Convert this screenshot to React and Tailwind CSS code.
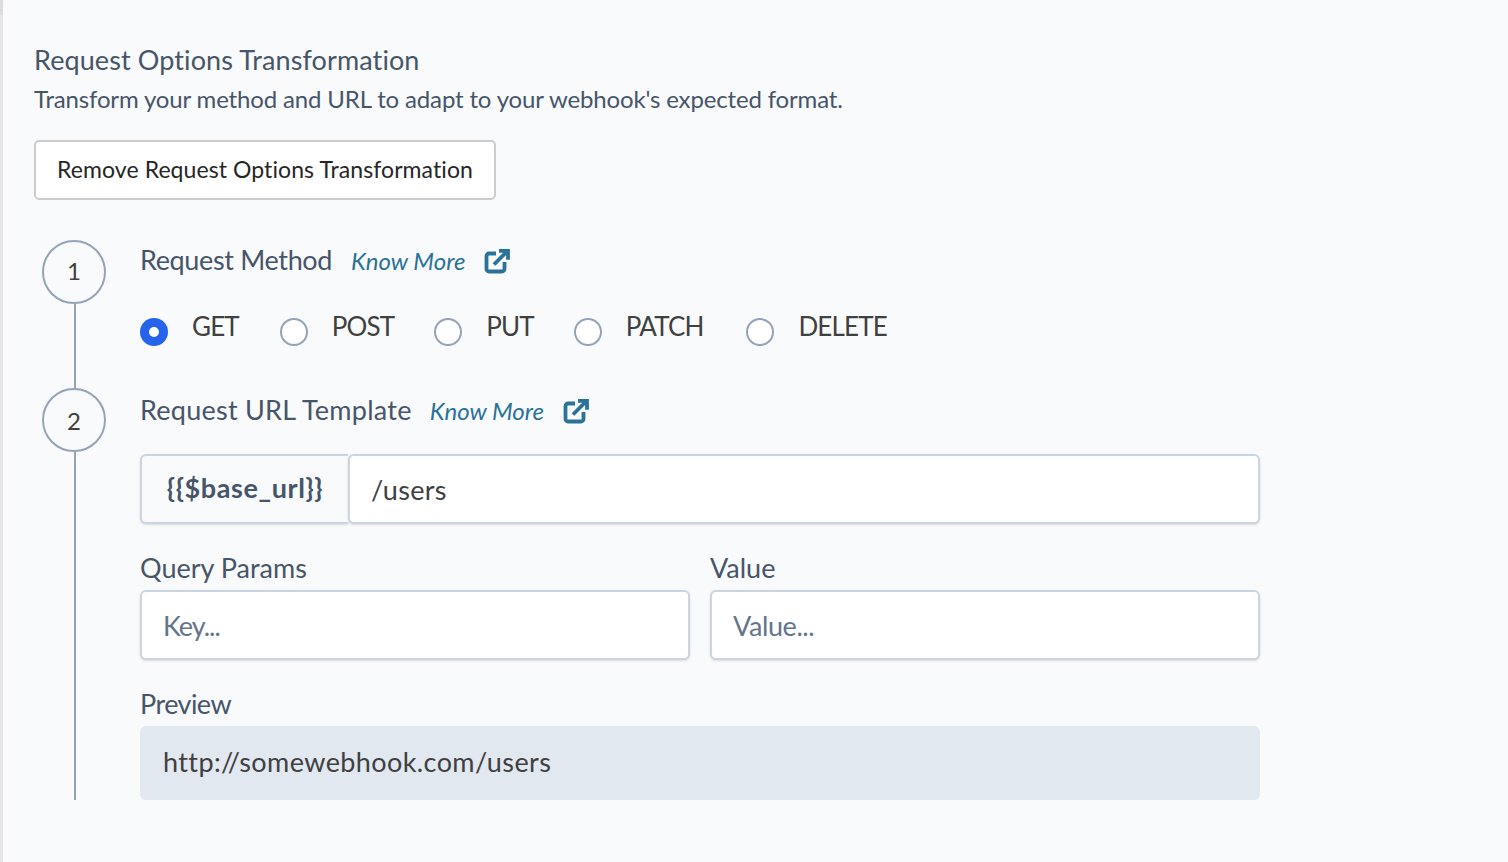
import React from "react";

const font = { fontFamily: 'Lato, "Noto Sans", sans-serif', fontVariantLigatures: "none" };

function LinkIcon() {
  return (
    <svg viewBox="0 0 26 26" className="w-[26px] h-[26px] ml-[19px]" fill="none" stroke="#2a7297" strokeWidth="3.8">
      <path d="M12 5.5H5a2.5 2.5 0 0 0-2.5 2.5v13a2.5 2.5 0 0 0 2.5 2.5h13a2.5 2.5 0 0 0 2.5-2.5v-7" strokeLinejoin="round" />
      <path d="M10 16.5 22 4.5" />
      <path d="M15 2.8h9v9" strokeLinejoin="miter" />
    </svg>
  );
}

function KnowMore({ className }) {
  return (
    <span className={"flex items-center mt-[2px] " + (className || "")}>
      <span className="italic text-[24px] leading-[30px] text-[#2a7297]">Know More</span>
      <LinkIcon />
    </span>
  );
}

function Circle({ n, className }) {
  return (
    <div className={"w-[64px] h-[64px] rounded-full border-2 border-[#94a3b8] flex items-center justify-center text-[24px] text-[#404040] shrink-0 " + className}>
      {n}
    </div>
  );
}

function Radio({ label, checked }) {
  return (
    <label className="flex items-start">
      {checked ? (
        <span className="w-[28px] h-[28px] mt-[5px] rounded-full bg-[#2563eb] flex items-center justify-center">
          <span className="w-[10px] h-[10px] rounded-full bg-white" />
        </span>
      ) : (
        <span className="w-[28px] h-[28px] mt-[5px] rounded-full border-2 border-[#94a3b8] bg-white" />
      )}
      <span className="ml-[24px] text-[26px] leading-[26px] tracking-[-0.85px] text-[#404040]">{label}</span>
    </label>
  );
}

const inputCls =
  "w-full h-full bg-white border-2 border-[#cbd5e1] rounded-[6px] shadow-sm px-[21px] text-[27px] text-[#404040] placeholder:text-[#64748b] outline-none";

export default function App() {
  return (
    <div style={font} className="flex min-h-[862px] bg-[#f8fafc]">
      <div className="w-[3px] shrink-0 flex flex-col">
        <div className="h-[15px] bg-[#dcdcdc]" />
        <div className="flex-1 bg-[#e5e5e5]" />
      </div>
      <div className="flex-1 pl-[31px] pt-[40px]">
        <h2 className="text-[27px] leading-[40px] tracking-[0.1px] text-[#475569] font-normal">Request Options Transformation</h2>
        <p className="text-[24px] leading-[38px] tracking-[-0.15px] text-[#475569]">Transform your method and URL to adapt to your webhook's expected format.</p>
        <button className="mt-[22px] h-[60px] w-[462px] pb-[2px] bg-white border-2 border-[#cccccc] rounded-[5px] text-[23px] tracking-[0.08px] text-[#262626]">
          Remove Request Options Transformation
        </button>

        <div className="mt-[40px] ml-[8px] flex h-[148px]">
          <div className="w-[64px] flex flex-col items-center">
            <Circle n="1" className="pb-[2px]" />
            <div className="w-[2px] flex-1 bg-[#94a3b8] ml-[2px]" />
          </div>
          <div className="ml-[34px]">
            <div className="flex items-center h-[40px]">
              <span className="text-[27px] tracking-[-0.35px] text-[#475569]">Request Method</span>
              <KnowMore className="ml-[19px]" />
            </div>
            <div className="flex mt-[33px]">
              <Radio label="GET" checked />
              <div className="ml-[41px]"><Radio label="POST" /></div>
              <div className="ml-[40px]"><Radio label="PUT" /></div>
              <div className="ml-[40px]"><Radio label="PATCH" /></div>
              <div className="ml-[43px]"><Radio label="DELETE" /></div>
            </div>
          </div>
        </div>

        <div className="ml-[8px] flex h-[412px]">
          <div className="w-[64px] flex flex-col items-center">
            <Circle n="2" className="pt-[1px]" />
            <div className="w-[2px] flex-1 bg-[#94a3b8] ml-[2px]" />
          </div>
          <div className="ml-[34px] w-[1120px]">
            <div className="flex items-center h-[44px]">
              <span className="text-[27px] tracking-[0.25px] text-[#475569]">Request URL Template</span>
              <KnowMore className="ml-[18px]" />
            </div>
            <div className="flex h-[70px] mt-[22px]">
              <div className="w-[208px] shrink-0 flex items-center justify-center pb-[2px] bg-[#f8fafc] border-2 border-r-0 border-[#cbd5e1] rounded-l-[6px] shadow-sm font-bold text-[27px] tracking-[0.6px] text-[#475569]">
                {"{{$base_url}}"}
              </div>
              <input readOnly value="/users" className={inputCls + " tracking-[0.3px]"} />
            </div>
            <div className="grid grid-cols-2 gap-x-[20px] mt-[24px]">
              <div>
                <div className="text-[27px] leading-[40px] pb-[2px] text-[#475569]">Query Params</div>
                <div className="h-[70px]"><input readOnly placeholder="Key..." className={inputCls + " tracking-[-1px]"} /></div>
              </div>
              <div>
                <div className="text-[27px] leading-[40px] pb-[2px] text-[#475569]">Value</div>
                <div className="h-[70px]"><input readOnly placeholder="Value..." className={inputCls + " tracking-[-0.4px]"} /></div>
              </div>
            </div>
            <div className="text-[27px] leading-[40px] pb-[2px] mt-[24px] tracking-[-0.55px] text-[#475569]">Preview</div>
            <div className="h-[74px] flex items-center bg-[#e2e8f0] rounded-[6px] pl-[23px] pb-[2px] text-[27px] tracking-[0.4px] text-[#404040]">
              http://somewebhook.com/users
            </div>
          </div>
        </div>
      </div>
    </div>
  );
}
